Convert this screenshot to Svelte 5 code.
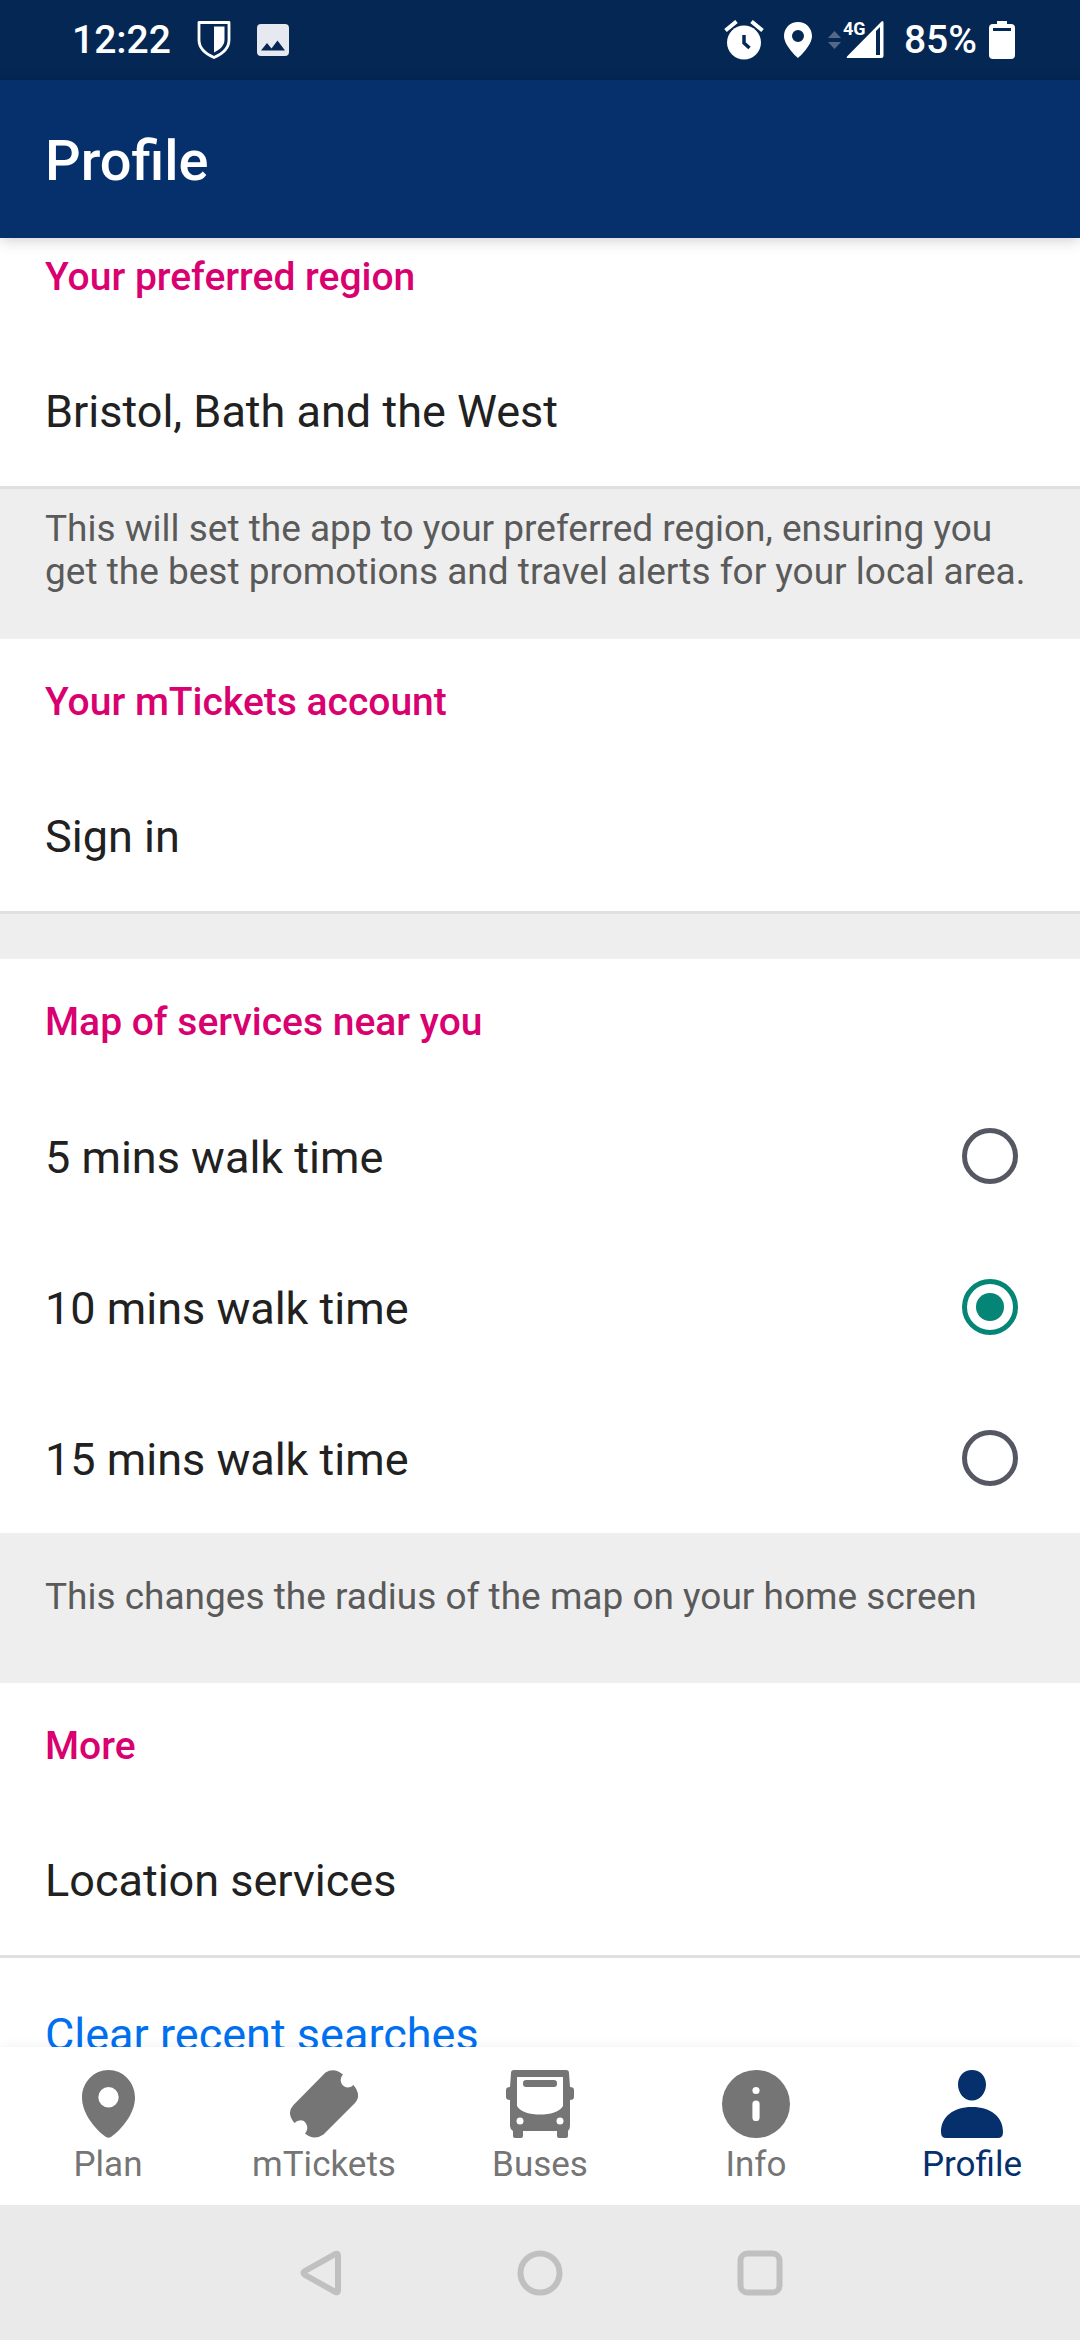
<script>
  const times = [5, 10, 15];
  let walk = $state(10);
</script>

<div class="screen">
  <div class="status">
    <span class="clock">12:22</span>
    <svg class="shield" width="34" height="38" viewBox="0 0 34 38"><path d="M2 1.500h30v17.500c0 9-7 14-15 17.500c-8-3.500-15-8.500-15-17.500z" fill="none" stroke="#fff" stroke-width="2.800" stroke-linejoin="round"/><path d="M17 5.500h10.500v13c0 6-4.500 10-10.500 13z" fill="#fff"/></svg>
    <svg width="32" height="32" viewBox="0 0 32 32"><path d="M4 0h24a4 4 0 0 1 4 4v24a4 4 0 0 1-4 4H4a4 4 0 0 1-4-4V4a4 4 0 0 1 4-4zM4 26.500h24l-7.500-10-6 8-4.500-5.500z" fill="#e6e9ef" fill-rule="evenodd"/></svg>
    <span class="fill"></span>
    <svg class="alarm" width="40" height="40" viewBox="0 0 40 40"><path d="M1.500 10.500 12.500 1.500M38.500 10.500 27.500 1.500" stroke="#fff" stroke-width="4"/><circle cx="20" cy="22.500" r="17" fill="#fff"/><path d="M20 15v8l5.500 5" fill="none" stroke="#042754" stroke-width="3.500"/></svg>
    <svg class="pin" width="28" height="36" viewBox="0 0 28 36"><path fill="#fff" fill-rule="evenodd" d="M14 0C6 0 0 6.200 0 14c0 10 14 22 14 22s14-12 14-22C28 6.200 22 0 14 0zm0 8a6 6 0 1 1 0 12a6 6 0 0 1 0-12z"/></svg>
    <svg class="signal" width="56" height="60" viewBox="0 -10 56 60"><path d="M0 18 6.500 11 13 18zM0 22h13l-6.500 7z" fill="#54698a"/><path fill="#fff" fill-rule="evenodd" d="M53.500 1.500Q55.500 0 55.500 3v33q0 2-2 2H20q-2 0-1-1.500zM48 11v24h4V7z"/><text x="15" y="15" fill="#fff" font-size="18" font-weight="700">4G</text></svg>
    <span class="percent">85%</span>
    <svg width="26" height="38" viewBox="0 0 26 38"><path fill="#fff" fill-rule="evenodd" d="M8 0h10v3h4a4 4 0 0 1 4 4v27a4 4 0 0 1-4 4H4a4 4 0 0 1-4-4V7a4 4 0 0 1 4-4h4zM4 7v3h18V7z"/></svg>
  </div>
  <header><h1>Profile</h1></header>

  <main>
    <section class="first">
      <h2>Your preferred region</h2>
      <button class="row">Bristol, Bath and the West</button>
    </section>
    <p class="note">This will set the app to your preferred region, ensuring you get the best promotions and travel alerts for your local area.</p>
    <section>
      <h2>Your mTickets account</h2>
      <button class="row">Sign in</button>
    </section>
    <div class="gap"></div>
    <section class="map">
      <h2>Map of services near you</h2>
      {#each times as t}
        <label class="row option">
          <span>{t} mins walk time</span>
          <input type="radio" name="walk" value={t} bind:group={walk} />
        </label>
      {/each}
    </section>
    <p class="note single">This changes the radius of the map on your home screen</p>
    <section>
      <h2>More</h2>
      <button class="row">Location services</button>
      <button class="row clear">Clear recent searches</button>
    </section>
  </main>

  <nav class="tabs">
    <a href="#plan"><svg width="53" height="68" viewBox="0 0 53 68"><path fill="currentColor" fill-rule="evenodd" d="M26.500 0C12 0 0 12 0 27.500C0 44 14 60 24 67q2.500 1.600 5 0C39 60 53 44 53 27.500C53 12 41 0 26.500 0zm0 17a10.200 10.200 0 1 1 0 20.400a10.200 10.200 0 0 1 0-20.400z"/></svg>Plan</a>
    <a href="#mtickets"><svg width="68" height="68" viewBox="0 0 68 68"><path fill="currentColor" d="M35.500 2.500Q44-3 53 4.500C48 10 52 17.500 57.500 17.500Q61 17.500 63.500 15Q72 25 65 33L33.500 64.500Q24 71 15 63.500C20 58 16 50.300 10.700 50.300Q7 50.300 4.500 53Q-4 43 3.500 35z"/></svg>mTickets</a>
    <a href="#buses"><svg width="68" height="68" viewBox="0 0 68 68"><path fill="currentColor" fill-rule="evenodd" d="M8 0h52q3 0 3 3l1 14q4 0 4 3v7q0 3-4 3v26q0 3-2 5v5q0 2-2 2h-7q-2 0-2-2v-5H17v5q0 2-2 2H9q-2 0-2-2v-5q-3-2-3-5V30q-4 0-4-3v-7q0-3 4-3l1-14q0-3 3-3zM11 7v29c3 6 13 8.500 23 8.500s20-2.500 23-8.500V7zM14 47.500a3.500 3.500 0 1 0 0 7a3.500 3.500 0 0 0 0-7zM54 47.500a3.500 3.500 0 1 0 0 7a3.500 3.500 0 0 0 0-7z"/><rect x="17" y="10" width="34" height="7" rx="3" fill="currentColor"/></svg>Buses</a>
    <a href="#info"><svg width="68" height="68" viewBox="0 0 68 68"><circle cx="34" cy="34" r="34" fill="currentColor"/><circle cx="34" cy="20.500" r="3.600" fill="#fff"/><rect x="30.400" y="30.500" width="7.200" height="20.500" rx="3.600" fill="#fff"/></svg>Info</a>
    <a href="#profile" class="active" aria-current="page"><svg width="62" height="68" viewBox="0 0 62 68"><path fill="currentColor" d="M31 0c8 0 14 6 14 14.500S39 30.500 31 30.500S17 23 17 14.500S23 0 31 0zM31 37c19 0 31 10 31 25q0 6-5 6H5q-5 0-5-6C0 47 12 37 31 37z"/></svg>Profile</a>
  </nav>

  <div class="system">
    <button aria-label="Back"><svg width="46" height="46" viewBox="0 0 46 46"><path d="M41 5.500V40.500Q41 43 38.500 42L8 25Q5 23 8 21L38.500 4Q41 3 41 5.500z"/></svg></button>
    <button aria-label="Home"><svg width="46" height="46" viewBox="0 0 46 46"><circle cx="23" cy="23" r="19.500"/></svg></button>
    <button aria-label="Recent apps"><svg width="46" height="46" viewBox="0 0 46 46"><rect x="3.500" y="3.500" width="39" height="39" rx="7"/></svg></button>
  </div>
</div>

<style>
  .screen { display: flex; flex-direction: column; height: 100vh; background: #fff; font-family: Roboto, sans-serif; color: #212121; overflow: hidden; }
  .status { flex: none; display: flex; align-items: center; height: 80px; padding: 0 65px 0 72px; background: #042754; color: #fff; box-sizing: border-box; }
  .clock, .percent { font-size: 39px; font-weight: 500; line-height: 48px; }
  .shield { margin: 0 26px; }
  .fill { flex: 1; }
  .pin { margin: 0 16px 0 20px; }
  .percent { margin: 0 12px 0 20px; }
  header { flex: none; display: flex; align-items: center; height: 158px; padding: 4px 45px 0; box-sizing: border-box; background: #05306c; color: #fff; position: relative; z-index: 1; box-shadow: 0 2px 14px #0003; }
  h1 { margin: 0; font-size: 56px; line-height: 64px; font-weight: 500; }
  main { flex: 1; min-height: 0; overflow: hidden; background: #eee; }
  section { background: #fff; padding-top: 24px; }
  .first { padding-top: 0; }
  h2 { margin: 0; padding: 16px 45px 38px; font-size: 39px; line-height: 46px; font-weight: 500; color: #d9006f; }
  .map h2 { padding-bottom: 35px; }
  .row { display: flex; align-items: center; width: 100%; height: 151px; padding: 0 45px; border: 0; background: #fff; box-sizing: border-box; font: 400 45px/52px Roboto, sans-serif; color: #212121; text-align: left; }
  button.row { border-bottom: 3px solid #e0e0e0; }
  button.clear { padding-top: 6px; color: #0070f0; }
  .option { justify-content: space-between; padding-right: 62px; }
  .option span { padding-top: 4px; }
  input { appearance: none; margin: 0; width: 56px; height: 56px; border: 5px solid #555862; border-radius: 50%; display: grid; place-items: center; }
  input:checked { border-color: #048576; }
  input:checked::before { content: ""; width: 28px; height: 28px; border-radius: 50%; background: #048576; }
  .note { margin: 0; padding: 18px 45px 46px; font-size: 37px; line-height: 43px; color: #5a5a5a; }
  .single { padding: 42px 45px 65px; }
  .gap { height: 45px; }
  .tabs { flex: none; display: grid; grid-template-columns: repeat(5, 1fr); height: 158px; background: #fff; position: relative; box-shadow: 0 0 12px #0001; }
  .tabs a { display: flex; flex-direction: column; align-items: center; padding-top: 23px; gap: 7px; font-size: 35px; line-height: 40px; color: #757575; text-decoration: none; }
  .tabs .active { color: #05306c; }
  .system { flex: none; display: flex; justify-content: center; gap: 174px; height: 135px; background: #eaeaea; position: relative; }
  .system button { border: 0; padding: 0; background: none; display: grid; place-items: center; }
  .system svg { fill: none; stroke: #c0c0c0; stroke-width: 6; }
</style>
